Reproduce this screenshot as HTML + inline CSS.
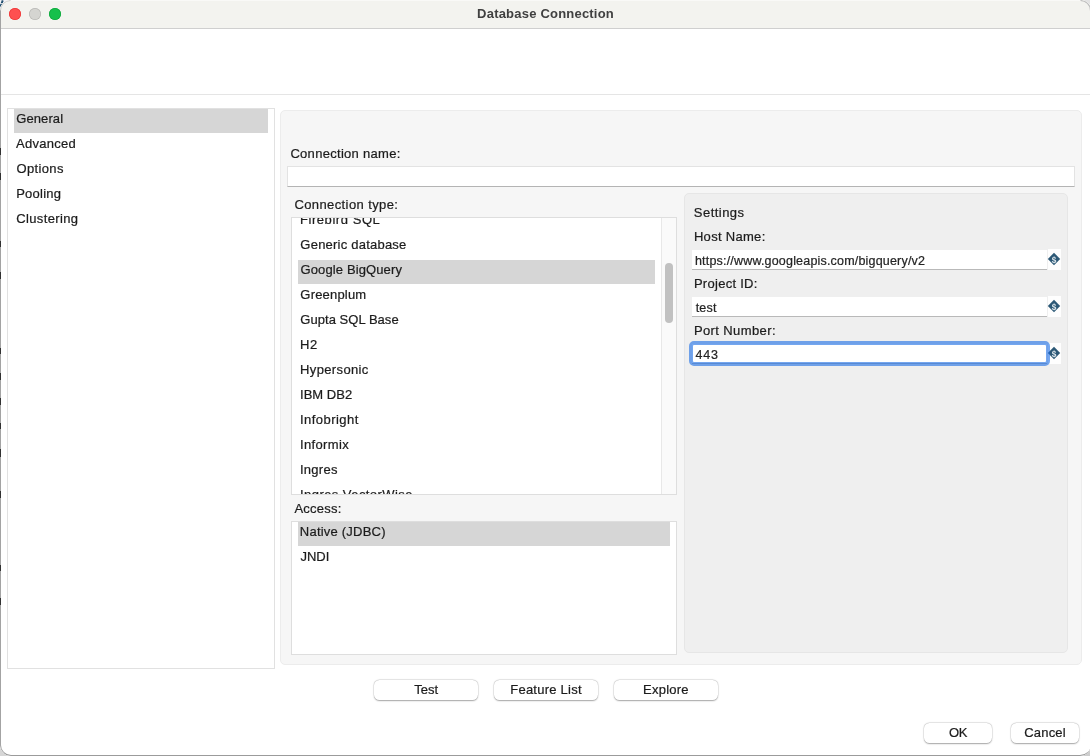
<!DOCTYPE html>
<html lang="en"><head><meta charset="utf-8"><title>Database Connection</title>
<style>
html,body{margin:0;padding:0}
body{width:1090px;height:756px;overflow:hidden;background:#fff;font-family:"Liberation Sans",sans-serif;font-size:13px;color:#1c1c1c;position:relative}
*{box-sizing:border-box}
.abs,.t,.win,.win div,.win span{position:absolute}
.t{white-space:nowrap;line-height:20px;height:20px;will-change:transform;-webkit-text-stroke:0.22px currentColor}
.win{left:0;top:0;width:1091px;height:756px;background:#fff;border-radius:10px 10px 11px 11px;overflow:hidden}
.frame{left:0;top:10px;width:1091px;height:746px;border-left:1px solid #a3a3a3;border-bottom:1px solid #9b9b9b;border-radius:0 0 11px 11px}
.titlebar{left:0;top:0;width:1090px;height:28px;background:#f3f3ef}
.tsep{left:0;top:28px;width:1090px;height:1px;background:#cfcfcf}
.dot{width:12px;height:12px;border-radius:50%;top:8px}
.mk{left:0;width:1px;background:rgba(20,20,20,.8)}
.hsep{left:1px;top:94px;width:1089px;height:1px;background:#e5e5e5}
.side{left:7px;top:108px;width:268px;height:561px;border:1px solid #e1e1e1;background:#fff}
.sel{background:#d6d6d6}
.panel{left:280px;top:110px;width:802px;height:555px;background:#f6f6f6;border:1px solid #ececec;border-radius:5px}
.inp{background:#fff;border:1px solid #e3e3e3;border-bottom-color:#b4b4b4}
.listbox{background:#fff;border:1px solid #dedede;overflow:hidden}
.track{background:#fafafa;border-left:1px solid #e8e8e8}
.thumb{background:#c1c1c1;border-radius:4px}
.settings{left:684px;top:193px;width:384px;height:460px;background:#efefef;border:1px solid #e6e6e6;border-radius:5px}
.fieldbg{background:#fefefe}
.field{background:#fff;border-bottom:1px solid #b9b9b9}
.btn{background:#fff;border-radius:5.5px;box-shadow:0 0 0 0.5px rgba(0,0,0,.09),0 0.5px 1.5px 0 rgba(0,0,0,.32)}
</style></head>
<body>
<svg style="position:absolute;left:0;top:0" width="10" height="12" viewBox="0 0 10 12"><rect width="10" height="12" fill="#f3f3f7"/><path d="M-0.9 10.4 L3.1 -0.5" stroke="#1f4e6e" stroke-width="2" stroke-dasharray="3 0.8" fill="none"/></svg>
<div style="position:absolute;left:1078px;top:0;width:12px;height:12px;background:#e3e3e3"></div><div style="position:absolute;left:0;top:743px;width:13px;height:13px;background:#d6d6d6"></div><div style="position:absolute;left:1077px;top:743px;width:13px;height:13px;background:#cdcdcd"></div>
<div class="win">
<div class="titlebar"></div><div style="left:8px;top:0;width:1074px;height:1px;background:#f9f9f7"></div><div class="tsep"></div>
<div class="dot" style="left:9px;background:#fe5050;box-shadow:inset 0 0 0 .8px #ee3a3a"></div><div class="dot" style="left:29px;background:#d5d5d1;box-shadow:inset 0 0 0 .7px #b9b9b5"></div><div class="dot" style="left:49px;background:#15c04b;box-shadow:inset 0 0 0 .8px #10a93e"></div>
<div class="hsep"></div>
<div class="side"></div><div class="sel" style="left:14px;top:109px;width:254px;height:24px"></div>
<div class="panel"></div>
<div class="inp" style="left:287px;top:166px;width:788px;height:21px"></div>
<div class="listbox" style="left:291px;top:217px;width:386px;height:278px"></div>
<div class="sel" style="left:298px;top:260px;width:357px;height:24px"></div>
<div class="track" style="left:661px;top:218px;width:15px;height:276px"></div>
<div class="thumb" style="left:665px;top:263px;width:8px;height:60px"></div>
<div style="left:291px;top:218px;width:369px;height:276px;overflow:hidden" id="clip">
<span class="t" style="top:-8px;left:9px;letter-spacing:0.558px;">Firebird SQL</span>
<span class="t" style="top:17px;left:9px;transform:translateX(0.34px);letter-spacing:0.224px;">Generic database</span>
<span class="t" style="top:42px;left:9px;transform:translateX(0.51px);letter-spacing:0.120px;">Google BigQuery</span>
<span class="t" style="top:67px;left:9px;transform:translateX(0.34px);letter-spacing:0.187px;">Greenplum</span>
<span class="t" style="top:92px;left:9px;transform:translateX(0.34px);letter-spacing:0.038px;">Gupta SQL Base</span>
<span class="t" style="top:117px;left:9px;transform:translateX(0.03px);letter-spacing:0.481px;">H2</span>
<span class="t" style="top:142px;left:9px;transform:translateX(0.03px);letter-spacing:0.368px;">Hypersonic</span>
<span class="t" style="top:167px;left:8px;transform:translateX(0.99px);letter-spacing:0.026px;">IBM DB2</span>
<span class="t" style="top:192px;left:8px;transform:translateX(0.99px);letter-spacing:0.453px;">Infobright</span>
<span class="t" style="top:217px;left:8px;transform:translateX(0.99px);letter-spacing:0.358px;">Informix</span>
<span class="t" style="top:242px;left:8px;transform:translateX(0.99px);letter-spacing:0.257px;">Ingres</span>
<span class="t" style="top:267px;left:8px;transform:translateX(0.99px);letter-spacing:0.440px;">Ingres VectorWise</span>
</div>
<div class="listbox" style="left:291px;top:521px;width:386px;height:134px"></div>
<div class="sel" style="left:298px;top:522px;width:372px;height:24px"></div>
<div class="settings"></div>
<div class="fieldbg" style="left:1048px;top:249px;width:13px;height:21px"></div><div class="field" style="left:692px;top:250px;width:355px;height:20px"></div>
<svg style="position:absolute;left:1047.0px;top:252.3px;will-change:transform" width="14" height="14" viewBox="0 0 14 14"><path d="M7 0.8 L13.2 7 L7 13.2 L0.8 7 Z" fill="#2c5876"/><text transform="translate(7.1 10.5) scale(0.84 1)" font-family="Liberation Sans, sans-serif" font-size="9.8" font-weight="700" fill="#dbe5ea" text-anchor="middle">$</text></svg>
<div class="fieldbg" style="left:1048px;top:296px;width:13px;height:21px"></div><div class="field" style="left:692px;top:297px;width:355px;height:20px"></div>
<svg style="position:absolute;left:1047.0px;top:299.3px;will-change:transform" width="14" height="14" viewBox="0 0 14 14"><path d="M7 0.8 L13.2 7 L7 13.2 L0.8 7 Z" fill="#2c5876"/><text transform="translate(7.1 10.5) scale(0.84 1)" font-family="Liberation Sans, sans-serif" font-size="9.8" font-weight="700" fill="#dbe5ea" text-anchor="middle">$</text></svg>
<div class="fieldbg" style="left:1048px;top:343px;width:13px;height:21px"></div><div class="field" style="left:692px;top:344px;width:355px;height:20px"></div>
<svg style="position:absolute;left:1047.0px;top:346.3px;will-change:transform" width="14" height="14" viewBox="0 0 14 14"><path d="M7 0.8 L13.2 7 L7 13.2 L0.8 7 Z" fill="#2c5876"/><text transform="translate(7.1 10.5) scale(0.84 1)" font-family="Liberation Sans, sans-serif" font-size="9.8" font-weight="700" fill="#dbe5ea" text-anchor="middle">$</text></svg>
<div style="left:689px;top:341px;width:361px;height:25px;border-radius:5px;border:4px solid rgba(24,106,229,.6)"></div>
<div class="btn" style="left:374px;top:680px;width:104px;height:20px"></div><div class="btn" style="left:494px;top:680px;width:104px;height:20px"></div><div class="btn" style="left:614px;top:680px;width:104px;height:20px"></div><div class="btn" style="left:924px;top:723px;width:68px;height:20px"></div><div class="btn" style="left:1011px;top:723px;width:68px;height:20px"></div>
<span class="t" style="top:4px;left:477px;transform:translateX(0.09px);font-weight:700;-webkit-text-stroke:0;color:#404040;letter-spacing:0.210px;">Database Connection</span>
<span class="t" style="top:109px;left:16px;transform:translateX(0.27px);letter-spacing:0.090px;">General</span>
<span class="t" style="top:134px;left:16px;letter-spacing:0.273px;">Advanced</span>
<span class="t" style="top:159px;left:16px;transform:translateX(0.41px);letter-spacing:0.366px;">Options</span>
<span class="t" style="top:184px;left:16px;transform:translateX(0.15px);letter-spacing:0.260px;">Pooling</span>
<span class="t" style="top:209px;left:16px;transform:translateX(0.26px);letter-spacing:0.351px;">Clustering</span>
<span class="t" style="top:144px;left:290px;transform:translateX(0.38px);letter-spacing:0.299px;">Connection name:</span>
<span class="t" style="top:195px;left:294px;transform:translateX(0.38px);letter-spacing:0.399px;">Connection type:</span>
<span class="t" style="top:499px;left:294px;transform:translateX(0.44px);letter-spacing:0.248px;">Access:</span>
<span class="t" style="top:203px;left:693px;transform:translateX(0.87px);letter-spacing:0.455px;">Settings</span>
<span class="t" style="top:227px;left:693px;transform:translateX(0.92px);letter-spacing:0.300px;">Host Name:</span>
<span class="t" style="top:274px;left:693px;transform:translateX(0.92px);letter-spacing:0.273px;">Project ID:</span>
<span class="t" style="top:321px;left:693px;transform:translateX(0.92px);letter-spacing:0.391px;">Port Number:</span>
<span class="t" style="top:251px;left:694px;transform:translateX(0.94px);font-size:12.5px;color:#242424;letter-spacing:0.189px;">https://www.googleapis.com/bigquery/v2</span>
<span class="t" style="top:298px;left:695px;transform:translateX(0.67px);font-size:12.5px;color:#242424;letter-spacing:0.213px;">test</span>
<span class="t" style="top:345px;left:695px;transform:translateX(0.57px);font-size:12.5px;color:#242424;letter-spacing:0.709px;">443</span>
<span class="t" style="top:522px;left:299px;transform:translateX(0.84px);letter-spacing:0.213px;">Native (JDBC)</span>
<span class="t" style="top:547px;left:300px;transform:translateX(0.38px);letter-spacing:0.039px;">JNDI</span>
<span class="t" style="top:680px;left:414px;transform:translateX(0.25px);letter-spacing:0.047px;">Test</span>
<span class="t" style="top:680px;left:510px;transform:translateX(0.23px);letter-spacing:0.240px;">Feature List</span>
<span class="t" style="top:680px;left:643px;transform:translateX(0.03px);letter-spacing:0.235px;">Explore</span>
<span class="t" style="top:723px;left:948px;transform:translateX(0.97px);letter-spacing:-0.359px;">OK</span>
<span class="t" style="top:723px;left:1024px;transform:translateX(0.23px);letter-spacing:0.195px;">Cancel</span>
<div class="frame"></div><div class="mk" style="top:148px;height:7px"></div><div class="mk" style="top:173px;height:7px"></div><div class="mk" style="top:241px;height:6px"></div><div class="mk" style="top:272px;height:7px"></div><div class="mk" style="top:348px;height:6px"></div><div class="mk" style="top:373px;height:7px"></div><div class="mk" style="top:398px;height:7px"></div><div class="mk" style="top:423px;height:6px"></div><div class="mk" style="top:449px;height:8px"></div><div class="mk" style="top:491px;height:7px"></div><div class="mk" style="top:565px;height:6px"></div><div class="mk" style="top:598px;height:7px"></div>
<svg style="position:absolute;left:0;top:0" width="12" height="12" viewBox="0 0 12 12"><path d="M0.5 10.5 A10 10 0 0 1 10.5 0.5" stroke="#c9c9c9" stroke-width="1" fill="none"/></svg>
<svg style="position:absolute;left:1078px;top:0" width="13" height="12" viewBox="0 0 13 12"><path d="M2.5 0.5 A10 10 0 0 1 12.5 10.5" stroke="#bdbdbd" stroke-width="1.2" fill="none"/></svg>
</div>
</body></html>
